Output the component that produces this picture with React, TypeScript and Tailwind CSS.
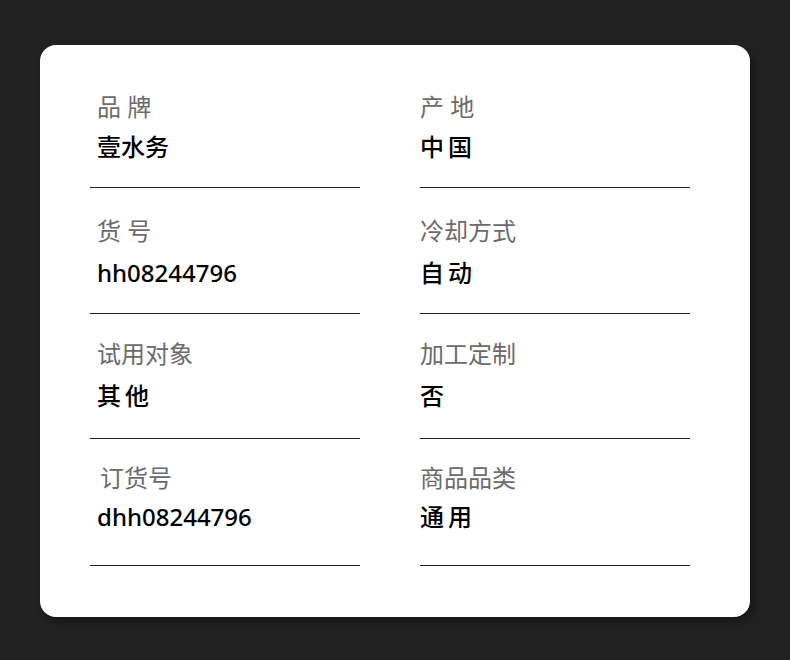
const rows = [
  {
    pad: 'pt-[25px] pb-[22px]',
    gap: 'mt-[4px]',
    cells: [
      { label: '品 牌', value: '壹水务' },
      { label: '产 地', value: '中\u2009国' },
    ],
  },
  {
    pad: 'pt-[25px] pb-[22px]',
    gap: 'mt-[6px]',
    cells: [
      { label: '货 号', value: 'hh08244796' },
      { label: '冷却方式', value: '自\u2009动' },
    ],
  },
  {
    pad: 'pt-[22px] pb-[24px]',
    gap: 'mt-[6px]',
    cells: [
      { label: '试用对象', value: '其\u2009他' },
      { label: '加工定制', value: '否' },
    ],
  },
  {
    pad: 'pt-[21px] pb-[30px]',
    gap: 'mt-[3px]',
    cells: [
      { label: '订货号', value: 'dhh08244796', indent: true },
      { label: '商品品类', value: '通\u2009用' },
    ],
  },
];

export default function App() {
  return (
    <div
      className="min-h-[660px] w-full bg-[#222222] pt-[45px] pl-[40px]"
      style={{ fontFamily: '"Noto Sans", "Noto Sans CJK SC", sans-serif' }}
    >
      <div className="w-[710px] h-[572px] bg-white rounded-2xl shadow-[4px_5px_10px_rgba(0,0,0,0.35)] pl-[50px] pr-[60px]">
        {rows.map((row, ri) => (
          <div key={ri} className="grid grid-cols-2 gap-x-[60px]">
            {row.cells.map((cell, ci) => (
              <div key={ci} className={`border-b border-[#222222] ${row.pad} ${ri === 0 ? 'pt-[44px]' : ''}`}>
                <div
                  className={`text-[24px] leading-[36px] text-[#6b6b6b] whitespace-pre ${
                    ci === 0 ? (cell.indent ? 'pl-[10px]' : 'pl-[7px]') : 'pl-0'
                  }`}
                >
                  {cell.label}
                </div>
                <div
                  className={`${row.gap} text-[24px] leading-[36px] text-black font-medium whitespace-pre ${
                    ci === 0 ? 'pl-[7px]' : 'pl-0'
                  }`}
                >
                  {cell.value}
                </div>
              </div>
            ))}
          </div>
        ))}
      </div>
    </div>
  );
}
